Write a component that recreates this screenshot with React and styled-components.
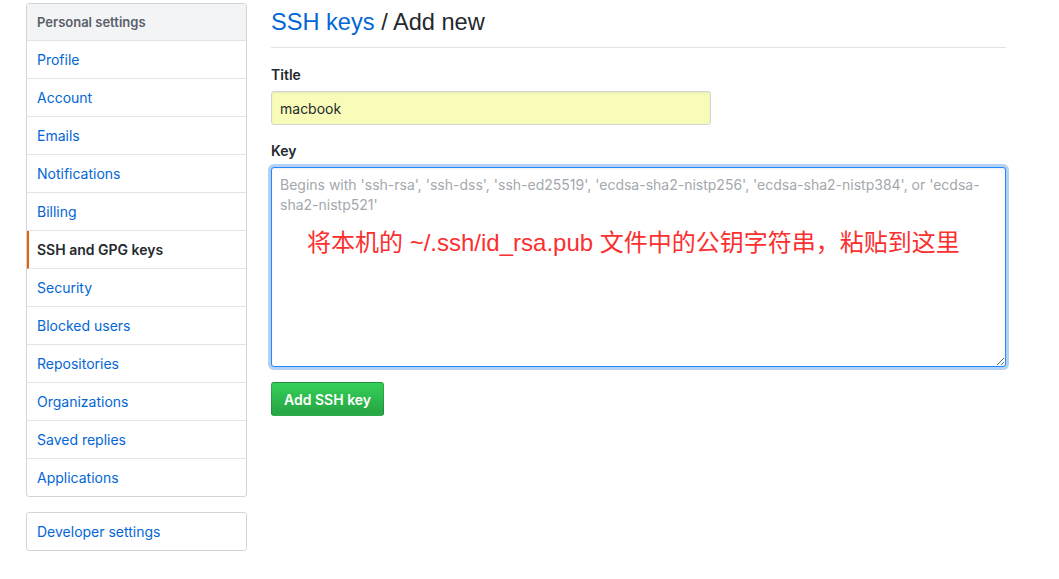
import React from "react";
import styled, { createGlobalStyle, css } from "styled-components";

const Global = createGlobalStyle`
  html, body { margin: 0; padding: 0; background: #fff; }
  body {
    font-family: Inter, "Liberation Sans", Arial, "Noto Sans CJK SC", sans-serif;
    font-size: 14px;
    color: #24292e;
  }
  * { box-sizing: border-box; }
`;

const Page = styled.div`
  display: flex;
  align-items: flex-start;
  gap: 24px;
  padding: 3px 0 0 26px;
`;

const Sidebar = styled.div`
  width: 221px;
  flex: none;
  display: flex;
  flex-direction: column;
  gap: 15px;
`;

const Menu = styled.nav`
  border: 1px solid #d1d5da;
  border-radius: 3px;
  overflow: hidden;
  display: flex;
  flex-direction: column;
`;

const MenuHeading = styled.div`
  height: 37px;
  padding: 0 10px;
  display: flex;
  align-items: center;
  background: #f3f4f6;
  border-bottom: 1px solid #e1e4e8;
  color: #586069;
  font-weight: 600;
  font-size: 13px;
`;

const MenuItem = styled.a`
  height: 38px;
  padding: 0 10px;
  display: flex;
  align-items: center;
  color: #0366d6;
  text-decoration: none;
  border-bottom: 1px solid #e1e4e8;
  &:last-child { border-bottom: none; height: 37px; }
  ${(p) =>
    p.$selected &&
    css`
      color: #24292e;
      font-weight: 600;
      border-left: 2px solid #e36209;
      padding-left: 8px;
    `}
`;

const Main = styled.main`
  width: 735px;
  flex: none;
`;

const Heading = styled.h2`
  margin: 4px 0 0;
  padding-bottom: 10px;
  border-bottom: 1px solid #e1e4e8;
  font-family: "Liberation Sans", Arial, sans-serif;
  font-size: 23.6px;
  line-height: 30px;
  font-weight: normal;
  color: #24292e;
`;

const Crumb = styled.a`
  color: #0366d6;
  text-decoration: none;
`;

const Form = styled.form`
  display: flex;
  flex-direction: column;
  align-items: flex-start;
  padding-top: 17px;
`;

const Label = styled.label`
  display: block;
  font-weight: 600;
  font-size: 14px;
  line-height: 20px;
  margin-bottom: 6px;
  margin-top: ${(p) => p.$top || 0}px;
`;

const TextInput = styled.input`
  width: 440px;
  height: 34px;
  padding: 0 8px;
  font: inherit;
  font-size: 14px;
  color: #24292e;
  background: #f9fcb9;
  border: 1px solid #d1d5da;
  border-radius: 3px;
  box-shadow: inset 0 1px 2px rgba(27, 31, 35, 0.075);
  outline: none;
`;

const KeyWrap = styled.div`
  position: relative;
  width: 735px;
`;

const KeyArea = styled.textarea`
  display: block;
  width: 735px;
  height: 200px;
  padding: 7px 8px;
  font: inherit;
  font-size: 14px;
  line-height: 20px;
  border: 1px solid #2188ff;
  border-radius: 3px;
  outline: none;
  resize: vertical;
  box-shadow: inset 0 1px 2px rgba(27, 31, 35, 0.075),
    0 0 0 3px rgba(3, 102, 214, 0.3);
  &::placeholder { color: #a3a8ae; }
`;

const Annotation = styled.div`
  position: absolute;
  left: 36px;
  top: 62px;
  font-family: "Liberation Sans", Arial, "Noto Sans CJK SC", sans-serif;
  font-size: 24px;
  line-height: 28px;
  color: #fc2f2f;
  white-space: nowrap;
  pointer-events: none;
`;

const Button = styled.button`
  margin-top: 15px;
  height: 34px;
  padding: 0 12px;
  font: inherit;
  font-size: 14px;
  font-weight: 600;
  color: #fff;
  background-image: linear-gradient(-180deg, #34d058 0%, #28a745 90%);
  border: 1px solid rgba(27, 31, 35, 0.2);
  border-radius: 3px;
  cursor: pointer;
`;

const items = [
  "Profile",
  "Account",
  "Emails",
  "Notifications",
  "Billing",
  "SSH and GPG keys",
  "Security",
  "Blocked users",
  "Repositories",
  "Organizations",
  "Saved replies",
  "Applications",
];

export default function App() {
  return (
    <>
      <Global />
      <Page>
        <Sidebar>
          <Menu>
            <MenuHeading>Personal settings</MenuHeading>
            {items.map((t) => (
              <MenuItem key={t} $selected={t === "SSH and GPG keys"}>
                {t}
              </MenuItem>
            ))}
          </Menu>
          <Menu>
            <MenuItem>Developer settings</MenuItem>
          </Menu>
        </Sidebar>
        <Main>
          <Heading>
            <Crumb>SSH keys</Crumb> / Add new
          </Heading>
          <Form onSubmit={(e) => e.preventDefault()}>
            <Label>Title</Label>
            <TextInput defaultValue="macbook" />
            <Label $top={16}>Key</Label>
            <KeyWrap>
              <KeyArea placeholder="Begins with 'ssh-rsa', 'ssh-dss', 'ssh-ed25519', 'ecdsa-sha2-nistp256', 'ecdsa-sha2-nistp384', or 'ecdsa-sha2-nistp521'" />
              <Annotation>将本机的 ~/.ssh/id_rsa.pub 文件中的公钥字符串，粘贴到这里</Annotation>
            </KeyWrap>
            <Button type="submit">Add SSH key</Button>
          </Form>
        </Main>
      </Page>
    </>
  );
}
